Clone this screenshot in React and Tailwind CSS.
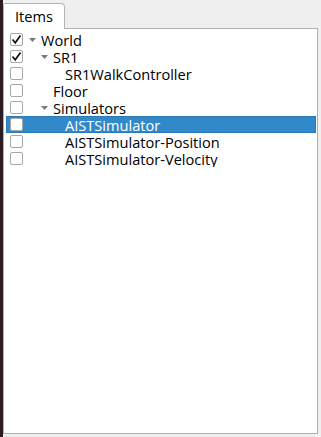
const items = [
  { label: 'World', depth: 0, checked: true, arrow: true },
  { label: 'SR1', depth: 1, checked: true, arrow: true },
  { label: 'SR1WalkController', depth: 2, checked: false },
  { label: 'Floor', depth: 1, checked: false },
  { label: 'Simulators', depth: 1, checked: false, arrow: true },
  { label: 'AISTSimulator', depth: 2, checked: false, selected: true },
  { label: 'AISTSimulator-Position', depth: 2, checked: false },
  { label: 'AISTSimulator-Velocity', depth: 2, checked: false },
];

function Check({ checked }) {
  return (
    <div className="w-[13px] h-[13px] bg-white border border-[#a8a8a8] rounded-[2px] flex items-center justify-center shrink-0">
      {checked && (
        <svg width="11" height="11" viewBox="0 0 11 11">
          <path d="M1.5 5.5 L4.2 8.8 L9.5 1.5" fill="none" stroke="#111" strokeWidth="1.7" />
        </svg>
      )}
    </div>
  );
}

function Row({ item }) {
  const indent = { 0: 'pl-[6px]', 1: 'pl-[18px]', 2: 'pl-[30px]' }[item.depth];
  return (
    <div
      className={`h-[17px] flex items-center pl-[2px] overflow-hidden ${
        item.selected ? 'bg-[#3189c9] border border-[#2a78b5] text-white -ml-[2px] pl-[3px]' : 'text-black'
      }`}
    >
      <Check checked={item.checked} />
      <div className={`flex items-center ${indent}`}>
        <div className="w-[12px] flex items-center">
          {item.arrow && (
            <svg width="7" height="4" viewBox="0 0 7 4">
              <path d="M0 0 L7 0 L3.5 4 Z" fill="#7a7a7a" />
            </svg>
          )}
        </div>
        <span className="text-[14.6px] leading-[16px]">{item.label}</span>
      </div>
    </div>
  );
}

export default function App() {
  return (
    <div className="w-[321px] h-[437px] flex bg-[#efefef] overflow-hidden" style={{ fontFamily: '"Open Sans", "Noto Sans", sans-serif' }}>
      <div className="w-[3px] bg-[#2b1c26] shrink-0" />
      <div className="flex-1 flex flex-col pt-[3px] pr-[3px] pb-[3px]">
        <div className="flex">
          <div className="w-[62px] h-[26px] bg-white border border-b-0 border-[#b4b4b4] rounded-tr-[4px] rounded-tl-[2px] flex items-center justify-center text-[14.6px] text-black -mb-px relative z-10">
            Items
          </div>
        </div>
        <div className="flex-1 bg-white border border-[#b0b0b0] pt-[2px] pl-[4px] pr-[1px]">
          {items.map((item) => (
            <Row key={item.label} item={item} />
          ))}
        </div>
      </div>
    </div>
  );
}
